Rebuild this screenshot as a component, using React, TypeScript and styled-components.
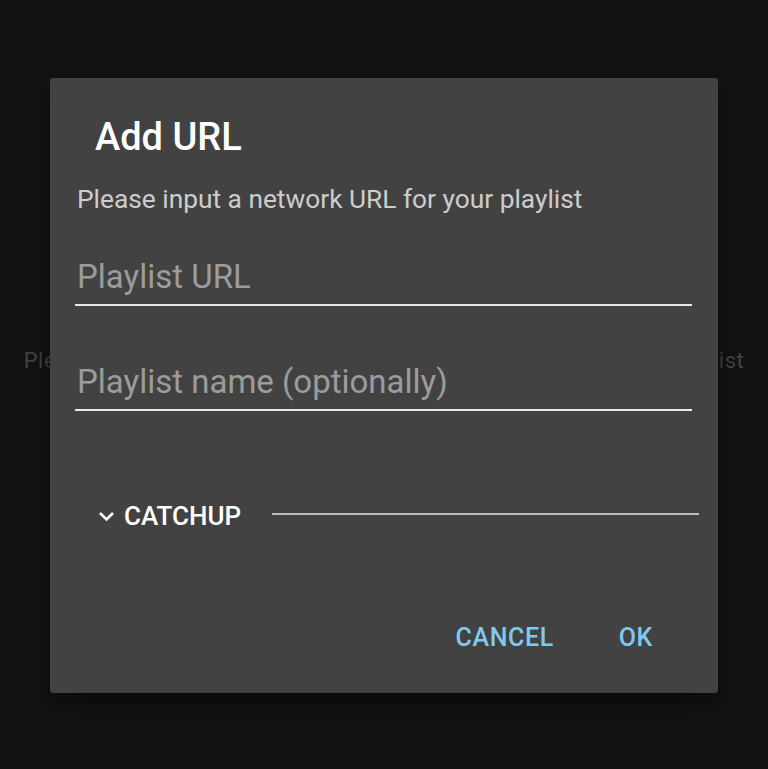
import styled, { createGlobalStyle } from "styled-components";

const GlobalStyle = createGlobalStyle`
  html, body {
    margin: 0;
    padding: 0;
    background: #131313;
    font-family: Roboto, "Noto Sans", Arial, sans-serif;
  }
`;

const Page = styled.div`
  position: relative;
  width: 768px;
  height: 769px;
  overflow: hidden;
  background: #131313;
  display: flex;
  align-items: center;
  justify-content: center;
`;

const EmptyText = styled.p`
  margin: 0;
  padding-bottom: 48px;
  font-size: 22px;
  color: #464646;
  white-space: nowrap;
  letter-spacing: 0.52px;
`;

// overlay sits on top of the empty list text
const Overlay = styled.div`
  position: absolute;
  inset: 0;
  display: flex;
  align-items: center;
  justify-content: center;
  padding-top: 1px;
`;

const Dialog = styled.div`
  width: 668px;
  height: 615px;
  box-sizing: border-box;
  background: #424242;
  border-radius: 3px;
  box-shadow: 0 10px 30px rgba(0, 0, 0, 0.55);
  display: flex;
  flex-direction: column;
  padding: 37px 0 0;
`;

const Title = styled.h2`
  margin: 0 0 0 45px;
  font-size: 38px;
  line-height: 44px;
  font-weight: 500;
  color: #ffffff;
`;

const Message = styled.p`
  margin: 26px 0 0 27px;
  font-size: 26.3px;
  line-height: 28px;
  color: #cdcdcd;
`;

const Field = styled.input<{ $first?: boolean }>`
  display: block;
  margin: ${(p) => (p.$first ? "44px" : "56px")} 26px 0 25px;
  padding: 0 0 7px 2px;
  height: 40px;
  box-sizing: content-box;
  background: transparent;
  border: none;
  border-bottom: 2px solid #e8e8e8;
  outline: none;
  font-family: inherit;
  font-size: 33px;
  line-height: 40px;
  color: #ffffff;

  &::placeholder {
    color: #9c9c9c;
  }
`;

const Section = styled.div`
  margin-top: 91px;
  display: flex;
  align-items: center;
  padding: 0 19px 0 48px;
`;

const SectionToggle = styled.button`
  display: flex;
  align-items: center;
  gap: 9px;
  padding: 0;
  background: none;
  border: none;
  font-family: inherit;
  font-size: 26px;
  line-height: 28px;
  font-weight: 500;
  color: #ffffff;
  cursor: pointer;
`;

const SectionRule = styled.div`
  flex: 1;
  height: 2px;
  margin-left: 31px;
  margin-top: -3px;
  background: #bdbdbd;
`;

const Actions = styled.div`
  margin-top: 93px;
  display: flex;
  justify-content: flex-end;
  gap: 65px;
  padding-right: 65px;
`;

const ActionButton = styled.button`
  padding: 0;
  background: none;
  border: none;
  font-family: inherit;
  font-size: 25px;
  line-height: 30px;
  font-weight: 500;
  letter-spacing: 0.6px;
  color: #80caef;
  cursor: pointer;
`;

const Chevron = () => (
  <svg width="17" height="12" viewBox="0 0 17 12" fill="none">
    <path d="M2 3l6.5 6.5L15 3" stroke="#ffffff" strokeWidth="2.6" />
  </svg>
);

export default function App() {
  return (
    <Page>
      <GlobalStyle />
      <EmptyText>
        Please press the "+" button in the top right corner to add a new playlist
      </EmptyText>
      <Overlay>
        <Dialog>
          <Title>Add URL</Title>
          <Message>Please input a network URL for your playlist</Message>
          <Field $first placeholder="Playlist URL" />
          <Field placeholder="Playlist name (optionally)" />
          <Section>
            <SectionToggle>
              <Chevron />
              CATCHUP
            </SectionToggle>
            <SectionRule />
          </Section>
          <Actions>
            <ActionButton>CANCEL</ActionButton>
            <ActionButton>OK</ActionButton>
          </Actions>
        </Dialog>
      </Overlay>
    </Page>
  );
}
